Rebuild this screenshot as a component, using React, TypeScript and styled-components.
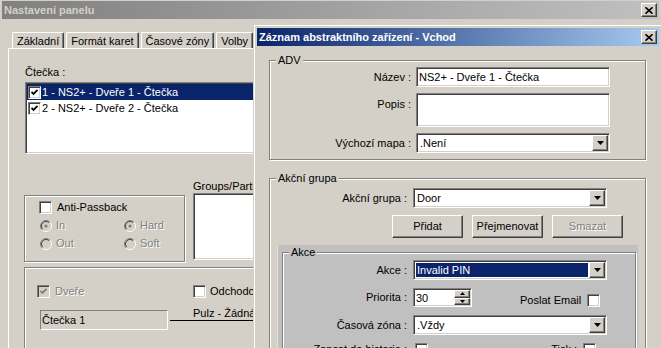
import React from 'react';
import styled, { createGlobalStyle, css } from 'styled-components';

const face = '#d4d0c8';
const shadow = '#808080';
const dark = '#404040';
const selBlue = '#0a246a';

const GlobalStyle = createGlobalStyle`
  html, body {
    margin: 0;
    padding: 0;
    background: #3a6ea5;
    overflow: hidden;
  }
  body {
    font-family: 'Liberation Sans', Arial, sans-serif;
    font-size: 11px;
    line-height: 13px;
    color: #000;
  }
`;

const sunken = css`
  border: 1px solid;
  border-color: ${shadow} #fff #fff ${shadow};
  box-shadow: inset 1px 1px ${dark}, inset -1px -1px ${face};
`;

const raised = css`
  border: 1px solid;
  border-color: #fff ${dark} ${dark} #fff;
  box-shadow: inset -1px -1px ${shadow}, inset 1px 1px ${face};
`;

const Desktop = styled.div`
  position: relative;
  width: 661px;
  height: 348px;
  overflow: hidden;
`;

const Win = styled.div<{ $x: number; $y: number; $w: number; $h: number }>`
  position: absolute;
  left: ${p => p.$x}px;
  top: ${p => p.$y}px;
  width: ${p => p.$w}px;
  height: ${p => p.$h}px;
  box-sizing: border-box;
  background: ${face};
  border: 1px solid;
  border-color: ${face} ${dark} ${dark} ${face};
  box-shadow: inset 1px 1px #fff, inset -1px -1px ${shadow};
  padding: 3px;
  display: flex;
  flex-direction: column;
`;

const TitleBar = styled.div<{ $active?: boolean }>`
  flex: none;
  height: 18px;
  display: flex;
  align-items: center;
  justify-content: space-between;
  padding: 0 2px;
  background: ${p =>
    p.$active
      ? 'linear-gradient(to right, #0a246a, #a6caf0)'
      : 'linear-gradient(to right, #808080, #c0c0c0)'};
  color: ${p => (p.$active ? '#fff' : face)};
  font-weight: bold;
  white-space: nowrap;
`;

const CloseBtn = styled.div`
  flex: none;
  width: 16px;
  height: 14px;
  box-sizing: border-box;
  background: ${face};
  border: 1px solid;
  border-color: #fff ${dark} ${dark} #fff;
  box-shadow: inset -1px -1px ${shadow};
  display: flex;
  align-items: center;
  justify-content: center;
`;

const CloseIcon = () => (
  <svg width="8" height="7" viewBox="0 0 8 7">
    <path d="M0.5 0.3 L7.5 6.7 M7.5 0.3 L0.5 6.7" stroke="#000" strokeWidth="1.6" fill="none" />
  </svg>
);

/* ---------- background window ---------- */

const MainBody = styled.div`
  flex: 1;
  display: flex;
  flex-direction: column;
  padding: 13px 0 0 6px;
`;

const TabRow = styled.div`
  display: flex;
  gap: 2px;
  padding-left: 4px;
`;

const Tab = styled.div`
  height: 16px;
  box-sizing: border-box;
  padding: 1px 4px 0;
  border: 1px solid;
  border-bottom: none;
  border-color: #fff ${dark} transparent #fff;
  border-radius: 2px 2px 0 0;
  box-shadow: inset -1px 0 ${shadow};
  line-height: 14px;
  white-space: nowrap;
`;

const TabPanel = styled.div`
  flex: 1;
  border-top: 1px solid #fff;
  border-left: 1px solid #fff;
  padding: 17px 0 0 16px;
  display: flex;
  flex-direction: column;
  align-items: flex-start;
`;

const ListBox = styled.div`
  margin-top: 3px;
  width: 330px;
  height: 72px;
  box-sizing: border-box;
  padding: 1px;
  background: #fff;
  ${sunken}
`;

const ListItem = styled.div<{ $selected?: boolean }>`
  height: 16px;
  display: flex;
  align-items: center;
  gap: 1px;
  padding-left: 1px;
  background: ${p => (p.$selected ? selBlue : 'transparent')};
  color: ${p => (p.$selected ? '#fff' : '#000')};
  white-space: nowrap;
`;

const Box = styled.span<{ $disabled?: boolean }>`
  flex: none;
  width: 13px;
  height: 13px;
  box-sizing: border-box;
  ${sunken}
  background: ${p => (p.$disabled ? face : '#fff')};
  color: ${p => (p.$disabled ? shadow : '#000')};
  display: inline-flex;
  align-items: center;
  justify-content: center;
`;

const CheckBox = ({ checked, disabled }: { checked?: boolean; disabled?: boolean }) => (
  <Box $disabled={disabled}>
    {checked && (
      <svg width="7" height="7" viewBox="0 0 7 7">
        <polyline points="0.5,3 2.5,5 6.5,1" stroke="currentColor" strokeWidth="1.8" fill="none" />
      </svg>
    )}
  </Box>
);

const RadioSvg = styled.svg`
  flex: none;
  display: block;
`;

const Radio = ({ checked, disabled }: { checked?: boolean; disabled?: boolean }) => (
  <RadioSvg width="12" height="12" viewBox="0 0 12 12">
    <circle cx="6" cy="6" r="5" fill={disabled ? face : '#fff'} />
    <path d="M2.1 9.9 A5.5 5.5 0 0 1 9.9 2.1" stroke={shadow} fill="none" />
    <path d="M9.9 2.1 A5.5 5.5 0 0 1 2.1 9.9" stroke="#fff" fill="none" />
    <path d="M2.8 9.2 A4.5 4.5 0 0 1 9.2 2.8" stroke={dark} fill="none" />
    <path d="M9.2 2.8 A4.5 4.5 0 0 1 2.8 9.2" stroke={face} fill="none" />
    {checked && <circle cx="6" cy="6" r="1.6" fill={disabled ? shadow : '#000'} />}
  </RadioSvg>
);

const Text = styled.span<{ $disabled?: boolean }>`
  white-space: nowrap;
  color: ${p => (p.$disabled ? shadow : '#000')};
  text-shadow: ${p => (p.$disabled ? '1px 1px #fff' : 'none')};
`;

const GroupBox = styled.div<{ $w?: number; $h?: number }>`
  position: relative;
  flex: none;
  box-sizing: border-box;
  width: ${p => (p.$w ? `${p.$w}px` : 'auto')};
  height: ${p => (p.$h ? `${p.$h}px` : 'auto')};
  border: 1px solid ${shadow};
  box-shadow: 1px 1px #fff, inset 1px 1px #fff;
`;

const Legend = styled.span<{ $bg?: string }>`
  position: absolute;
  top: -7px;
  left: 6px;
  padding: 0 2px;
  background: ${p => p.$bg ?? face};
  white-space: nowrap;
`;

const MidRow = styled.div`
  display: flex;
  align-items: flex-start;
  margin-top: 26px;
`;

const AntiGroup = styled(GroupBox)`
  margin: 15px 0 0 -1px;
  padding: 5px 0 0 14px;
`;

const OptionRow = styled.div<{ $gap?: number }>`
  display: flex;
  align-items: center;
  gap: ${p => p.$gap ?? 5}px;
  height: 13px;
`;

const RadioGrid = styled.div`
  display: grid;
  grid-template-columns: 84px auto;
  row-gap: 5px;
  margin-top: 5px;
  padding-left: 1px;
`;

const GroupsCol = styled.div`
  margin-left: 8px;
  display: flex;
  flex-direction: column;
`;

const GroupsList = styled.div`
  width: 220px;
  height: 67px;
  box-sizing: border-box;
  background: #fff;
  ${sunken}
`;

const BottomGroup = styled(GroupBox)`
  margin: 5px 0 0 -1px;
  padding: 17px 0 0 12px;
`;

const DoorRow = styled.div`
  display: flex;
  align-items: center;
  height: 13px;
`;

const DoorItem = styled.div<{ $w?: number; $gap: number }>`
  display: flex;
  align-items: center;
  gap: ${p => p.$gap}px;
  width: ${p => (p.$w ? `${p.$w}px` : 'auto')};
`;

const ReaderRow = styled.div`
  display: flex;
  align-items: flex-start;
  margin-top: 12px;
  padding-left: 3px;
`;

const ReadOnlyField = styled.div`
  width: 128px;
  height: 20px;
  box-sizing: border-box;
  border: 1px solid;
  border-color: ${shadow} #fff #fff ${shadow};
  padding: 3px 1px;
  white-space: nowrap;
`;

const PulzLine = styled.div`
  margin: -3px 0 0 2px;
  width: 200px;
  height: 13px;
  padding-left: 23px;
  border-bottom: 1px solid #000;
  white-space: nowrap;
`;

/* ---------- dialog ---------- */

const DialogBody = styled.div`
  flex: 1;
  display: flex;
  flex-direction: column;
  padding: 14px 13px 0 12px;
`;

const FormGrid = styled.div<{ $label: number; $gap: number; $top: number }>`
  display: grid;
  grid-template-columns: ${p => p.$label}px 194px;
  column-gap: ${p => p.$gap}px;
  row-gap: 6px;
  margin-top: ${p => p.$top}px;
`;

const FormLabel = styled.div<{ $top?: boolean }>`
  text-align: right;
  align-self: ${p => (p.$top ? 'start' : 'center')};
  padding-top: ${p => (p.$top ? 5 : 0)}px;
  white-space: nowrap;
`;

const Field = styled.div<{ $h: number; $w?: number }>`
  width: ${p => (p.$w ? `${p.$w}px` : '100%')};
  height: ${p => p.$h}px;
  box-sizing: border-box;
  background: #fff;
  ${sunken}
  padding: 3px 2px;
  white-space: nowrap;
  overflow: hidden;
`;

const SelectBox = styled.div<{ $h?: number }>`
  display: flex;
  align-items: stretch;
  height: ${p => p.$h ?? 20}px;
  box-sizing: border-box;
  background: #fff;
  ${sunken}
  padding: 1px;
`;

const SelectValue = styled.div<{ $hl?: boolean }>`
  flex: 1;
  margin: 1px;
  padding: 1px 1px 0;
  background: ${p => (p.$hl ? selBlue : 'transparent')};
  color: ${p => (p.$hl ? '#fff' : '#000')};
  white-space: nowrap;
  overflow: hidden;
`;

const DropBtn = styled.div`
  flex: none;
  width: 16px;
  box-sizing: border-box;
  background: ${face};
  ${raised}
  display: flex;
  align-items: center;
  justify-content: center;
`;

const Select = ({ value, hl, h }: { value: string; hl?: boolean; h?: number }) => (
  <SelectBox $h={h}>
    <SelectValue $hl={hl}>{value}</SelectValue>
    <DropBtn>
      <svg width="7" height="4" viewBox="0 0 7 4">
        <polygon points="0,0 7,0 3.5,4" fill="#000" />
      </svg>
    </DropBtn>
  </SelectBox>
);

const ButtonRow = styled.div`
  display: flex;
  gap: 9px;
  margin-top: 7px;
  padding-left: 122px;
`;

const Button = styled.div<{ $disabled?: boolean }>`
  width: 71px;
  height: 23px;
  box-sizing: border-box;
  background: ${face};
  ${raised}
  display: flex;
  align-items: center;
  justify-content: center;
  color: ${p => (p.$disabled ? shadow : '#000')};
  text-shadow: ${p => (p.$disabled ? '1px 1px #fff' : 'none')};
`;

const ActionPanel = styled.div`
  margin: 7px 0 0 7px;
  width: 361px;
  height: 120px;
  box-sizing: border-box;
  background: #c0c0c0;
  border-left: 1px solid #e2e2e2;
  padding: 7px 0 0 4px;
`;

const ActionGrid = styled(FormGrid)`
  row-gap: 8px;
`;

const SpinRow = styled.div`
  display: flex;
  align-items: flex-end;
`;

const SpinBox = styled.div`
  display: flex;
  width: 59px;
  height: 19px;
  box-sizing: border-box;
  background: #fff;
  ${sunken}
  padding: 1px;
`;

const SpinValue = styled.div`
  flex: 1;
  padding: 2px 1px 0;
`;

const SpinBtns = styled.div`
  display: flex;
  flex-direction: column;
  width: 16px;
`;

const SpinBtn = styled.div`
  flex: 1;
  box-sizing: border-box;
  background: ${face};
  ${raised}
  display: flex;
  align-items: center;
  justify-content: center;
`;

const EmailLabel = styled.span`
  margin-left: 48px;
  margin-right: 6px;
  white-space: nowrap;
`;

const LastRow = styled.div`
  display: flex;
  align-items: center;
  padding: 0 11px 0 2px;
`;

const PushRight = styled.span`
  margin-left: auto;
  margin-right: 6px;
  white-space: nowrap;
`;

const tabs = ['Základní', 'Formát karet', 'Časové zóny', 'Volby'];

export default function App() {
  return (
    <>
      <GlobalStyle />
      <Desktop>
        <Win $x={-2} $y={-3} $w={665} $h={360}>
          <TitleBar>
            <span>Nastavení panelu</span>
            <CloseBtn>
              <CloseIcon />
            </CloseBtn>
          </TitleBar>
          <MainBody>
            <TabRow>
              {tabs.map(t => (
                <Tab key={t}>{t}</Tab>
              ))}
            </TabRow>
            <TabPanel>
              <Text>Čtečka :</Text>
              <ListBox>
                <ListItem $selected>
                  <CheckBox checked />
                  <span>1 - NS2+ - Dveře 1 - Čtečka</span>
                </ListItem>
                <ListItem>
                  <CheckBox checked />
                  <span>2 - NS2+ - Dveře 2 - Čtečka</span>
                </ListItem>
              </ListBox>
              <MidRow>
                <AntiGroup $w={161} $h={67}>
                  <OptionRow $gap={5}>
                    <CheckBox />
                    <Text>Anti-Passback</Text>
                  </OptionRow>
                  <RadioGrid>
                    <OptionRow $gap={4}>
                      <Radio checked disabled />
                      <Text $disabled>In</Text>
                    </OptionRow>
                    <OptionRow $gap={4}>
                      <Radio checked disabled />
                      <Text $disabled>Hard</Text>
                    </OptionRow>
                    <OptionRow $gap={4}>
                      <Radio disabled />
                      <Text $disabled>Out</Text>
                    </OptionRow>
                    <OptionRow $gap={4}>
                      <Radio disabled />
                      <Text $disabled>Soft</Text>
                    </OptionRow>
                  </RadioGrid>
                </AntiGroup>
                <GroupsCol>
                  <Text>Groups/Partitions :</Text>
                  <GroupsList />
                </GroupsCol>
              </MidRow>
              <BottomGroup $w={420} $h={100}>
                <DoorRow>
                  <DoorItem $w={156} $gap={5}>
                    <CheckBox checked disabled />
                    <Text $disabled>Dveře</Text>
                  </DoorItem>
                  <DoorItem $gap={4}>
                    <CheckBox />
                    <Text>Odchodové tlačítko</Text>
                  </DoorItem>
                </DoorRow>
                <ReaderRow>
                  <ReadOnlyField>Čtečka 1</ReadOnlyField>
                  <PulzLine>Pulz - Žádná</PulzLine>
                </ReaderRow>
              </BottomGroup>
            </TabPanel>
          </MainBody>
        </Win>

        <Win $x={253} $y={24} $w={410} $h={340}>
          <TitleBar $active>
            <span>Záznam abstraktního zařízení - Vchod</span>
            <CloseBtn>
              <CloseIcon />
            </CloseBtn>
          </TitleBar>
          <DialogBody>
            <GroupBox $h={100}>
              <Legend>ADV</Legend>
              <FormGrid $label={141} $gap={5} $top={6}>
                <FormLabel>Název :</FormLabel>
                <Field $h={20}>NS2+ - Dveře 1 - Čtečka</Field>
                <FormLabel $top>Popis :</FormLabel>
                <Field $h={34} />
                <FormLabel>Výchozí mapa :</FormLabel>
                <Select value=".Není" />
              </FormGrid>
            </GroupBox>

            <GroupBox $h={200} style={{ marginTop: 18 }}>
              <Legend>Akční grupa</Legend>
              <FormGrid $label={137} $gap={6} $top={9}>
                <FormLabel>Akční grupa :</FormLabel>
                <Select value="Door" />
              </FormGrid>
              <ButtonRow>
                <Button>Přidat</Button>
                <Button>Přejmenovat</Button>
                <Button $disabled>Smazat</Button>
              </ButtonRow>
              <ActionPanel>
                <GroupBox $w={354} $h={120}>
                  <Legend $bg="#c0c0c0">Akce</Legend>
                  <ActionGrid $label={124} $gap={6} $top={7}>
                    <FormLabel>Akce :</FormLabel>
                    <Select value="Invalid PIN" hl />
                    <FormLabel>Priorita :</FormLabel>
                    <SpinRow>
                      <SpinBox>
                        <SpinValue>30</SpinValue>
                        <SpinBtns>
                          <SpinBtn>
                            <svg width="5" height="3" viewBox="0 0 5 3">
                              <polygon points="2.5,0 5,3 0,3" fill="#000" />
                            </svg>
                          </SpinBtn>
                          <SpinBtn>
                            <svg width="5" height="3" viewBox="0 0 5 3">
                              <polygon points="0,0 5,0 2.5,3" fill="#000" />
                            </svg>
                          </SpinBtn>
                        </SpinBtns>
                      </SpinBox>
                      <EmailLabel>Poslat Email</EmailLabel>
                      <CheckBox />
                    </SpinRow>
                    <FormLabel>Časová zóna :</FormLabel>
                    <Select value=".Vždy" />
                    <FormLabel>Zapsat do historie :</FormLabel>
                    <LastRow>
                      <CheckBox />
                      <PushRight>Tisk :</PushRight>
                      <CheckBox />
                    </LastRow>
                  </ActionGrid>
                </GroupBox>
              </ActionPanel>
            </GroupBox>
          </DialogBody>
        </Win>
      </Desktop>
    </>
  );
}
